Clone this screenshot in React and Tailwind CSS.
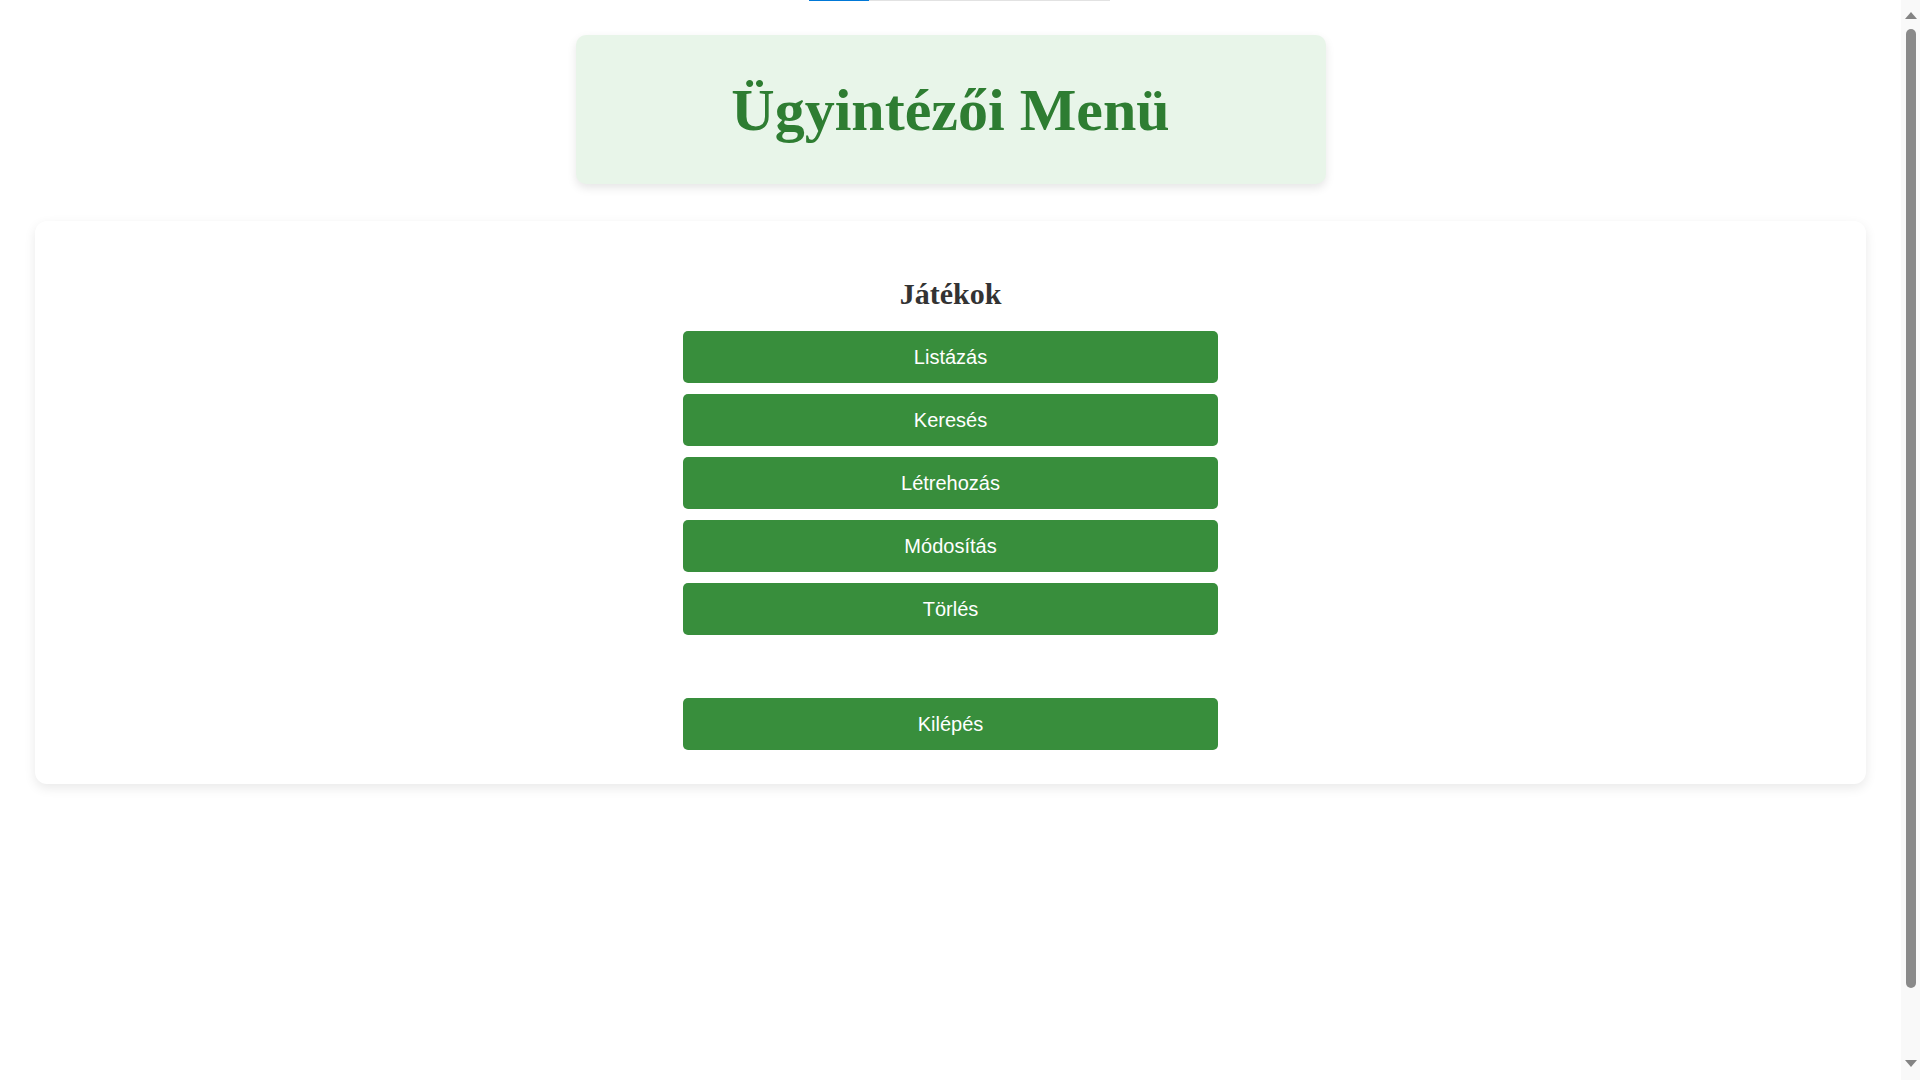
import React from "react";

const items = ["Listázás", "Keresés", "Létrehozás", "Módosítás", "Törlés"];

function MenuButton({ label }) {
  return (
    <button
      type="button"
      className="w-[535px] h-[52px] flex items-center justify-center rounded-[5px] bg-[#388e3c] text-white text-[20px] font-['Liberation_Sans',Arial,sans-serif] leading-none"
    >
      {label}
    </button>
  );
}

function Scrollbar() {
  return (
    <div className="w-[19px] h-full shrink-0 bg-[#f9f9f9] flex flex-col items-center pt-[12px] pb-[13px]">
      <div className="w-0 h-0 border-l-[6px] border-r-[6px] border-b-[7px] border-l-transparent border-r-transparent border-b-[#848484]" />
      <div className="mt-[10px] w-[10px] h-[959px] rounded-full bg-[#8a8a8a]" />
      <div className="flex-1" />
      <div className="w-0 h-0 border-l-[6px] border-r-[6px] border-t-[7px] border-l-transparent border-r-transparent border-t-[#848484]" />
    </div>
  );
}

export default function App() {
  return (
    <div className="flex h-screen overflow-hidden bg-white">
      <div className="w-[1901px] shrink-0 h-full overflow-hidden">
        <div className="ml-[809px] w-[301px] h-px flex">
          <div className="w-[60px] h-px bg-[#0078d7]" />
          <div className="flex-1 h-px bg-[#e2e2e2]" />
        </div>

        <header className="mt-[34px] mx-auto w-[750px] h-[149px] rounded-[10px] bg-[#e8f5e9] shadow-[0_4px_10px_rgba(0,0,0,0.1)] flex items-center justify-center">
          <h1 className="text-[60px] leading-[66px] font-bold text-[#2e7d32] font-['Liberation_Serif','Times_New_Roman',serif]">
            Ügyintézői Menü
          </h1>
        </header>

        <main className="mt-[37px] mx-[35px] h-[563px] rounded-[12px] bg-white shadow-[0_4px_12px_rgba(0,0,0,0.09)] flex flex-col items-center pt-[56px] pb-[34px]">
          <h2 className="text-[30px] leading-[34px] font-bold text-[#333333] font-['Liberation_Serif','Times_New_Roman',serif]">
            Játékok
          </h2>
          <div className="mt-[20px] flex flex-col gap-[11px]">
            {items.map((label) => (
              <MenuButton key={label} label={label} />
            ))}
          </div>
          <div className="mt-[63px]">
            <MenuButton label="Kilépés" />
          </div>
        </main>
      </div>
      <Scrollbar />
    </div>
  );
}
